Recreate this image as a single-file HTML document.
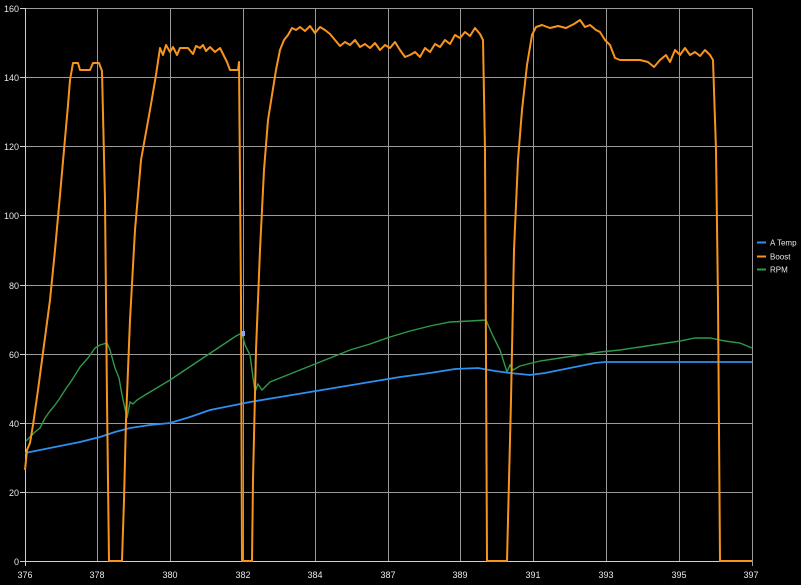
<!DOCTYPE html>
<html><head><style>
html,body{margin:0;padding:0;background:#000;}
svg{display:block;}
text{font-family:"Liberation Sans",sans-serif;font-size:9px;fill:#e8e8e8;}
</style></head><body>
<svg width="801" height="585" viewBox="0 0 801 585" xmlns="http://www.w3.org/2000/svg">
<rect width="801" height="585" fill="#000"/>
<g stroke="#9a9a9a" stroke-width="1">
<line x1="25" y1="8.5" x2="752" y2="8.5"/>
<line x1="25" y1="77.5" x2="752" y2="77.5"/>
<line x1="25" y1="146.5" x2="752" y2="146.5"/>
<line x1="25" y1="215.5" x2="752" y2="215.5"/>
<line x1="25" y1="285.5" x2="752" y2="285.5"/>
<line x1="25" y1="354.5" x2="752" y2="354.5"/>
<line x1="25" y1="423.5" x2="752" y2="423.5"/>
<line x1="25" y1="492.5" x2="752" y2="492.5"/>
<line x1="97.5" y1="8" x2="97.5" y2="561"/>
<line x1="170.5" y1="8" x2="170.5" y2="561"/>
<line x1="243.5" y1="8" x2="243.5" y2="561"/>
<line x1="315.5" y1="8" x2="315.5" y2="561"/>
<line x1="388.5" y1="8" x2="388.5" y2="561"/>
<line x1="460.5" y1="8" x2="460.5" y2="561"/>
<line x1="533.5" y1="8" x2="533.5" y2="561"/>
<line x1="606.5" y1="8" x2="606.5" y2="561"/>
<line x1="679.5" y1="8" x2="679.5" y2="561"/>
<line x1="752.5" y1="8" x2="752.5" y2="566"/>
</g>
<g stroke="#cfcfcf" stroke-width="1">
<line x1="25.5" y1="8" x2="25.5" y2="566"/>
<line x1="20" y1="561.5" x2="752" y2="561.5"/>
<line x1="20" y1="8.5" x2="25" y2="8.5"/><line x1="20" y1="77.5" x2="25" y2="77.5"/><line x1="20" y1="146.5" x2="25" y2="146.5"/><line x1="20" y1="215.5" x2="25" y2="215.5"/><line x1="20" y1="285.5" x2="25" y2="285.5"/><line x1="20" y1="354.5" x2="25" y2="354.5"/><line x1="20" y1="423.5" x2="25" y2="423.5"/><line x1="20" y1="492.5" x2="25" y2="492.5"/>
</g>
<g text-anchor="end">
<text x="19" y="12">160</text><text x="19" y="81">140</text><text x="19" y="150">120</text><text x="19" y="219">100</text><text x="19" y="289">80</text><text x="19" y="358">60</text><text x="19" y="427">40</text><text x="19" y="496">20</text><text x="19" y="565">0</text>
</g>
<g text-anchor="middle">
<text x="25" y="578">376</text><text x="97" y="578">378</text><text x="170" y="578">380</text><text x="243" y="578">382</text><text x="315" y="578">384</text><text x="388" y="578">387</text><text x="460" y="578">389</text><text x="533" y="578">391</text><text x="606" y="578">393</text><text x="679" y="578">395</text><text x="751" y="578">397</text>
</g>
<polyline fill="none" stroke="#2e9a4a" stroke-width="1.4" points="26,441 35,432 40,428 45,418 50,411 55,405 60,398 65,390 72,380 80,367 88,358 95,348 100,345 107,343 110,350 115,368 119,378 122,395 127,418 130,402 133,404 137,400 145,395 160,386 170,380 185,370 200,360 215,350 230,340 236,336 242,333 245,345 250,355 252,370 255,392 258,384 262,390 270,382 290,374 310,366 330,358 350,350 370,344 390,337 410,331 430,326 450,322 470,321 486,320 492,334 500,350 507,372 510,365 513,370 520,366 540,361 560,358 580,355 600,352 620,350 640,347 660,344 680,341 695,338 710,338 725,341 740,343 752,348"/>
<polyline fill="none" stroke="#2d8ff0" stroke-width="1.8" points="25,453 40,450 60,446 80,442 100,437 115,432 130,428 150,425 170,423 190,417 210,410 230,406 250,402 280,397 310,392 340,387 370,382 400,377 430,373 455,369 478,368 495,371 510,373 530,375 545,373 560,370 580,366 595,363 605,362 640,362 700,362 752,362"/>
<polyline fill="none" stroke="#f7941d" stroke-width="2" stroke-linejoin="round" points="25,470 27,450 30,443 33,425 38,390 42,360 46,330 50,300 55,250 60,195 64,150 68,105 70,80 73,63 78,63 80,70 83,70 90,70 93,63 99,63 102,71 105,200 107,400 109,561 122,561 124,500 126,420 130,320 135,230 141,160 150,110 156,75 160,48 163,55 166,45 170,52 173,47 177,55 180,48 188,48 193,54 196,46 200,48 203,45 206,51 210,47 215,52 220,48 224,56 227,62 230,70 238,70 239,62 241,300 242,561 252,561 253,480 256,350 260,250 264,170 268,120 272,95 276,70 280,50 284,40 288,35 292,28 296,30 300,27 305,31 310,26 315,33 320,27 325,30 330,34 335,40 340,46 345,42 350,45 355,40 360,47 365,44 370,48 375,43 380,50 385,45 390,48 395,42 400,50 405,57 410,55 415,52 420,57 425,48 430,52 435,44 440,47 445,40 450,44 455,35 460,38 465,32 470,36 475,28 480,34 483,40 485,150 487,561 507,561 508,520 511,400 514,250 518,160 522,110 527,65 532,35 536,27 542,25 550,28 558,26 566,28 574,24 580,20 585,27 590,25 596,30 600,32 605,40 610,45 615,58 620,60 630,60 640,60 648,62 654,67 660,60 666,55 670,62 675,50 680,55 685,48 690,55 695,52 700,56 705,50 710,55 713,60 716,150 718,300 720,561 752,561"/>
<rect x="241" y="331" width="4" height="5" fill="#7fb0ff"/>
<line x1="757" y1="242.5" x2="766" y2="242.5" stroke="#2d8ff0" stroke-width="2"/>
<line x1="757" y1="256.5" x2="766" y2="256.5" stroke="#f7941d" stroke-width="2"/>
<line x1="757" y1="269.5" x2="766" y2="269.5" stroke="#2e9a4a" stroke-width="2"/>
<text x="770" y="245.5" style="font-size:8px">A Temp</text>
<text x="770" y="259.5" style="font-size:8px">Boost</text>
<text x="770" y="272.5" style="font-size:8px">RPM</text>
</svg>
</body></html>
